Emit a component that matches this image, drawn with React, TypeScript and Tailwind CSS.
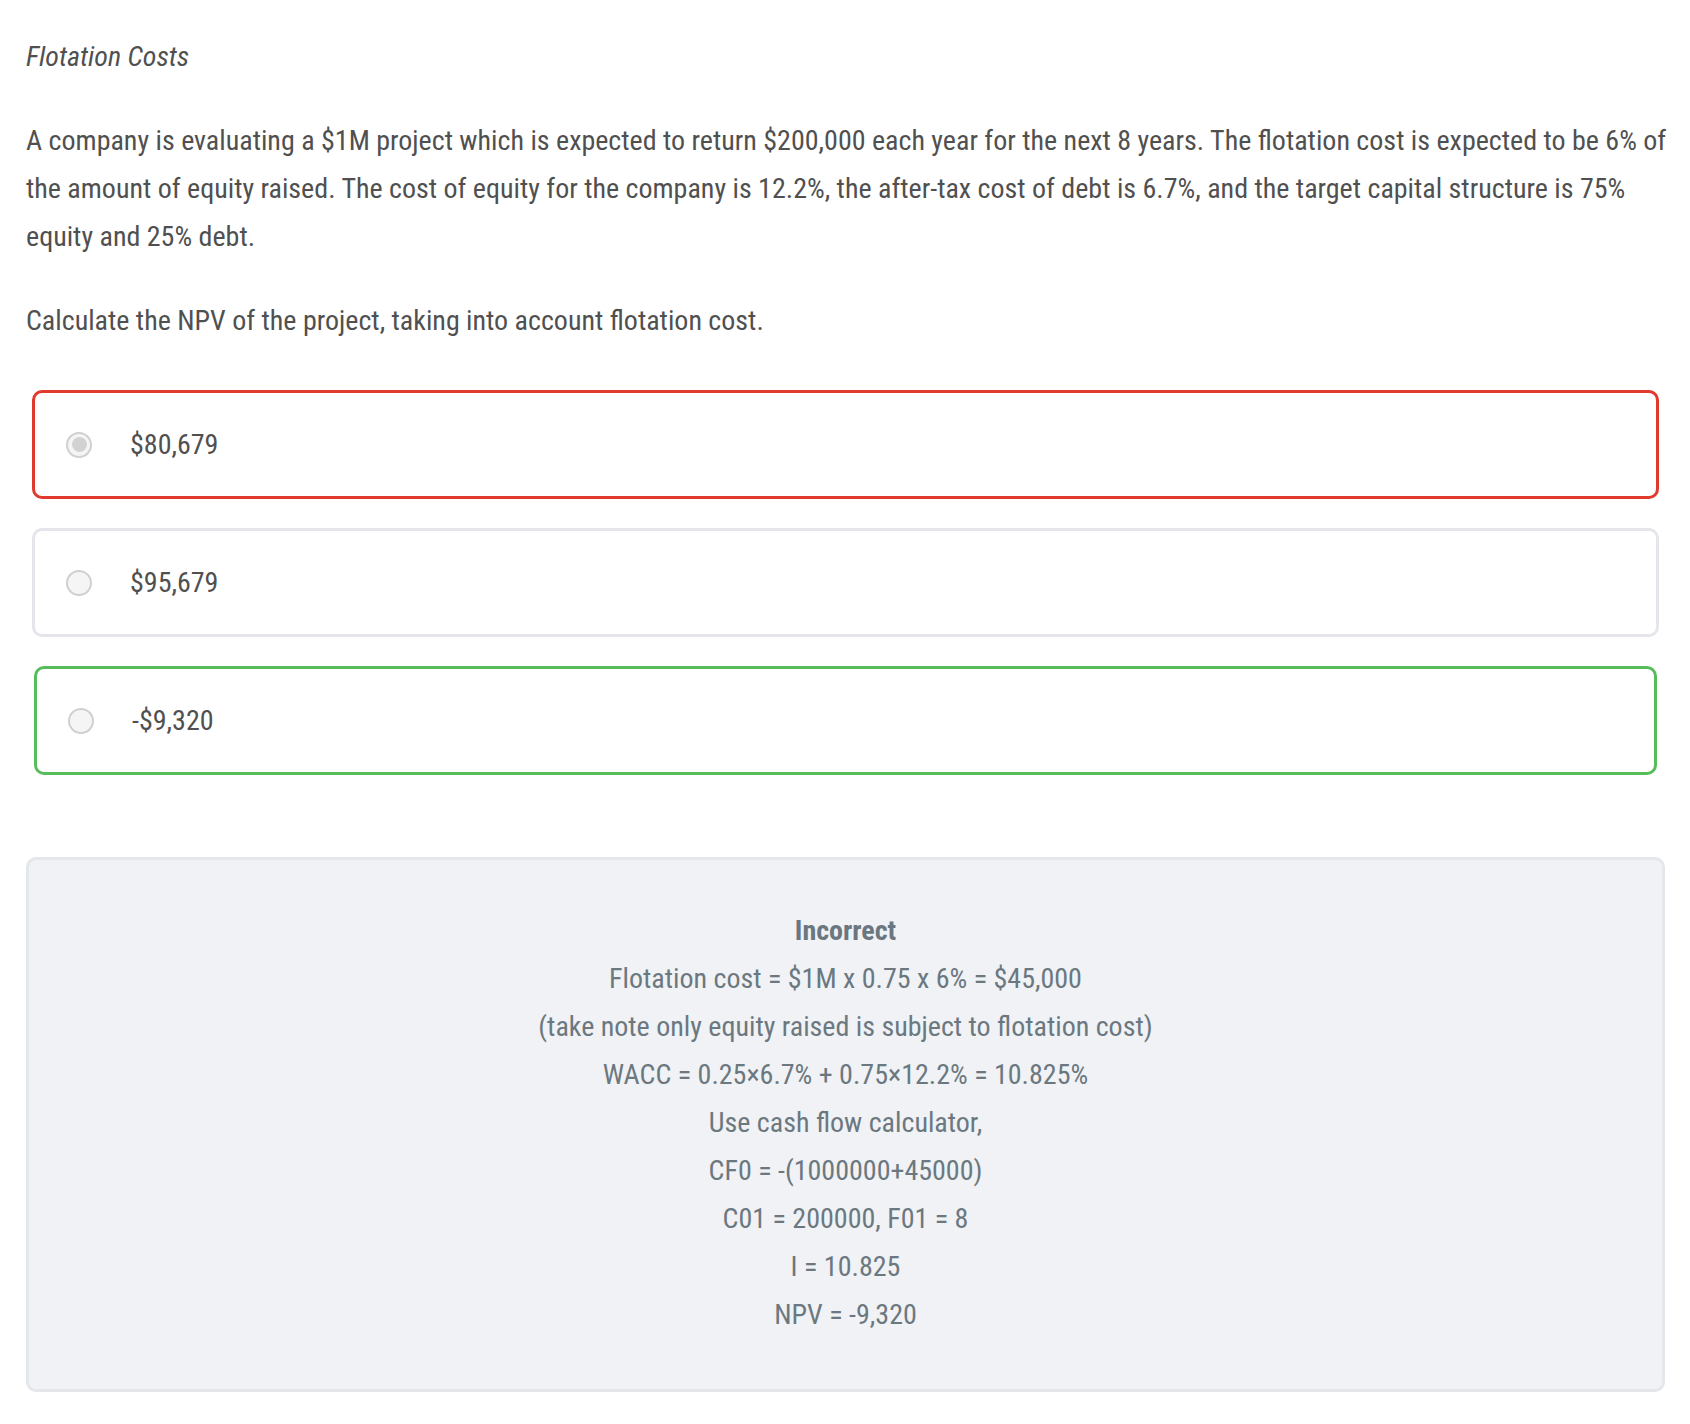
import React from "react";

type Choice = {
  label: string;
  state: "wrong" | "none" | "right";
  checked?: boolean;
};

const choices: Choice[] = [
  { label: "$80,679", state: "wrong", checked: true },
  { label: "$95,679", state: "none" },
  { label: "-$9,320", state: "right" },
];

const explanation = [
  "Flotation cost = $1M x 0.75 x 6% = $45,000",
  "(take note only equity raised is subject to flotation cost)",
  "WACC = 0.25×6.7% + 0.75×12.2% = 10.825%",
  "Use cash flow calculator,",
  "CF0 = -(1000000+45000)",
  "C01 = 200000, F01 = 8",
  "I = 10.825",
  "NPV = -9,320",
];

const Radio = ({ checked }: { checked?: boolean }) => (
  <span className="flex h-[26px] w-[26px] shrink-0 items-center justify-center rounded-full border-2 border-[#d0d0d0] bg-[#f5f5f5]">
    {checked && <span className="h-[15px] w-[15px] rounded-full bg-[#d2d2d2]" />}
  </span>
);

const ChoiceRow = ({ choice }: { choice: Choice }) => {
  const border =
    choice.state === "wrong"
      ? "border-[#e0392d] mx-[6px]"
      : choice.state === "right"
      ? "border-[#57bd5b] mx-[8px]"
      : "border-[#e4e6eb] mx-[6px]";
  return (
    <label
      className={`flex h-[109px] items-center rounded-[10px] border-[3px] bg-white pl-[31px] ${border}`}
    >
      <Radio checked={choice.checked} />
      <span className="ml-[38px] text-[#505050]">{choice.label}</span>
    </label>
  );
};

export default function App() {
  return (
    <div className="min-h-screen bg-white pl-[26px] pr-[25px] pt-[33px] pb-[34px] font-['Roboto_Condensed','Roboto',sans-serif] font-stretch-condensed text-[28px] leading-[48px] text-[#505050]">
      <p className="italic">Flotation Costs</p>

      <p className="mt-[36px] -mr-[18px]">
        A company is evaluating a $1M project which is expected to return
        $200,000 each year for the next 8 years. The flotation cost is expected
        to be 6% of the amount of equity raised. The cost of equity for the
        company is 12.2%, the after-tax cost of debt is 6.7%, and the target
        capital structure is 75% equity and 25% debt.
      </p>

      <p className="mt-[36px]">
        Calculate the NPV of the project, taking into account flotation cost.
      </p>

      <div className="mt-[45px] flex flex-col gap-[29px]">
        {choices.map((c) => (
          <ChoiceRow key={c.label} choice={c} />
        ))}
      </div>

      <div className="mt-[82px] rounded-[10px] border-[3px] border-[#e3e6ea] bg-[#f0f2f5] pt-[47px] pb-[50px] text-center text-[#6b7880]">
        <p className="font-bold text-[#6b7780]">Incorrect</p>
        {explanation.map((line) => (
          <p key={line}>{line}</p>
        ))}
      </div>
    </div>
  );
}
